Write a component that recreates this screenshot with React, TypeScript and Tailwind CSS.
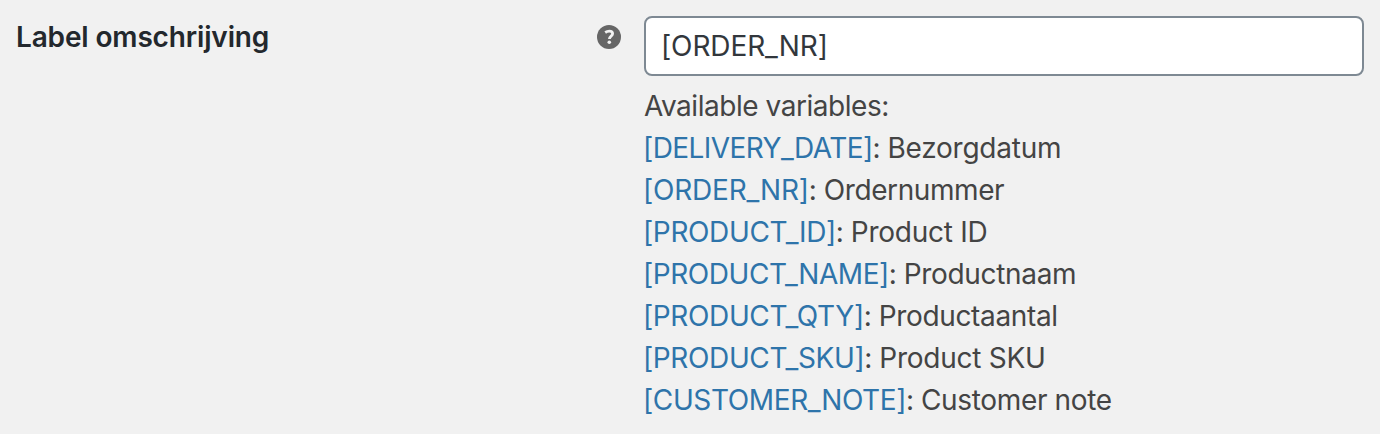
const variables = [
  { code: "[DELIVERY_DATE]", text: "Bezorgdatum", codeClass: "tracking-[-0.57px]", textClass: "tracking-[-0.25px]" },
  { code: "[ORDER_NR]", text: "Ordernummer", codeClass: "tracking-[-0.2px]", textClass: "tracking-[-0.4px]" },
  { code: "[PRODUCT_ID]", text: "Product ID", codeClass: "tracking-[-0.36px]", textClass: "tracking-[-0.25px]" },
  { code: "[PRODUCT_NAME]", text: "Productnaam", codeClass: "tracking-[-0.44px]", textClass: "tracking-[-0.33px]" },
  { code: "[PRODUCT_QTY]", text: "Productaantal", codeClass: "tracking-[-0.37px]", textClass: "tracking-[-0.35px]" },
  { code: "[PRODUCT_SKU]", text: "Product SKU", codeClass: "tracking-[-0.37px]", textClass: "tracking-[-0.25px]" },
  { code: "[CUSTOMER_NOTE]", text: "Customer note", codeClass: "tracking-[-0.38px]", textClass: "tracking-[-0.35px]" },
];

export default function App() {
  return (
    <div className="flex h-[434px] w-[1380px] items-start bg-[#f1f1f1] px-4 pt-4 font-['Inter',sans-serif]">
      <div className="flex w-[628px] items-center justify-between pr-[23px] text-[28px] leading-[42px] text-[#23282d]">
        <label htmlFor="label-description" className="font-semibold tracking-[-0.15px]">Label omschrijving</label>
        <svg viewBox="0 0 24 24" className="size-6">
          <circle cx="12" cy="12" r="12" fill="#666" />
          <path d="M8.2 7.5C9.4 6.7 10.7 6.2 12.3 6.2c2 0 3.3.9 3.3 2.5 0 2.4-3.2 2.4-3.2 5.2" fill="none" stroke="#f1f1f1" strokeWidth="2.8" />
          <circle cx="12.3" cy="17.3" r="1.8" fill="#f1f1f1" />
        </svg>
      </div>
      <div className="w-[720px] text-[28px] leading-[42px] text-[#444]">
        <input
          id="label-description"
          type="text"
          defaultValue="[ORDER_NR]"
          className="block h-[60px] w-full rounded-lg border-2 border-[#7e8993] bg-white px-[15px] tracking-[-0.1px] text-[#32373c]"
        />
        <div className="-ml-px mt-[9px]">
          <p className="pl-px tracking-[-0.46px]">Available variables:</p>
          {variables.map((v) => (
            <p key={v.code}>
              <a className={`text-[#2e74aa] ${v.codeClass}`}>{v.code}</a>
              <span className="tracking-[-0.5px]">: </span>
              <span className={v.textClass}>{v.text}</span>
            </p>
          ))}
        </div>
      </div>
    </div>
  );
}
